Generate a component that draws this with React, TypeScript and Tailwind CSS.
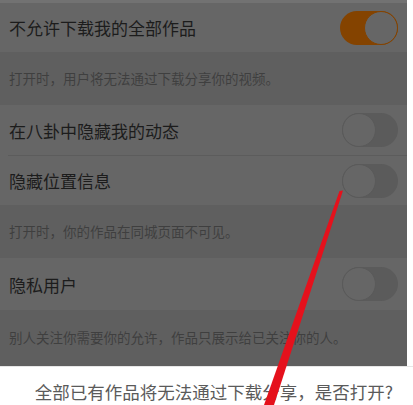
const font = { fontFamily: '"Noto Sans CJK SC", "Noto Sans", sans-serif' }

function Toggle({ on }: { on: boolean }) {
  if (on) {
    return (
      <div className="flex h-[34px] w-[58px] items-center justify-end rounded-full bg-[#844300]">
        <div className="h-[34px] w-[34px] rounded-full border-[1.5px] border-[#844300] bg-[#666666]" />
      </div>
    )
  }
  return (
    <div className="flex h-[34px] w-[56px] items-center rounded-full bg-[#5b5b5b]">
      <div className="h-[34px] w-[34px] rounded-full border border-[#5a5a5a] bg-[#666666]" />
    </div>
  )
}

function Row({ title, on, h }: { title: string; on: boolean; h: string }) {
  return (
    <div className={`flex items-center justify-between bg-[#666666] pl-[9px] pr-[9px] ${h}`}>
      <span className="text-[17px] leading-none text-[#1c1c1c]">{title}</span>
      <Toggle on={on} />
    </div>
  )
}

function Desc({ text, h }: { text: string; h: string }) {
  return (
    <div className={`flex items-center bg-[#5f5f5f] pl-[9px] ${h}`}>
      <span className="text-[13.5px] leading-none text-[#3f3f3f]">{text}</span>
    </div>
  )
}

export default function App() {
  return (
    <div className="relative h-[405px] w-[413px] overflow-hidden bg-white" style={font}>
      <div className="flex w-[407px] flex-col">
        <div className="h-[3px] bg-[#727272]" />
        <Row title="不允许下载我的全部作品" on h="h-[49px]" />
        <Desc text="打开时，用户将无法通过下载分享你的视频。" h="h-[53px]" />
        <Row title="在八卦中隐藏我的动态" on={false} h="h-[50px]" />
        <div className="bg-[#666666] pl-[8px]">
          <div className="h-px bg-[#5c5c5c]" />
        </div>
        <Row title="隐藏位置信息" on={false} h="h-[49px]" />
        <Desc text="打开时，你的作品在同城页面不可见。" h="h-[53px]" />
        <Row title="隐私用户" on={false} h="h-[52px]" />
        <Desc text="别人关注你需要你的允许，作品只展示给已关注你的人。" h="h-[56px]" />
      </div>
      <div className="flex h-[39px] w-[413px] items-center justify-center border-t border-[#e6e6e6] pt-[12px] pl-[15px]">
        <span className="text-[17.5px] leading-none text-[#5a5a5a]">
          全部已有作品将无法通过下载分享，是否打开?
        </span>
      </div>
      <svg className="absolute left-0 top-0" width="413" height="405" viewBox="0 0 413 405">
        <polygon points="339.5,191 343,190.5 274,405 264,405" fill="#e5111c" />
      </svg>
    </div>
  )
}
